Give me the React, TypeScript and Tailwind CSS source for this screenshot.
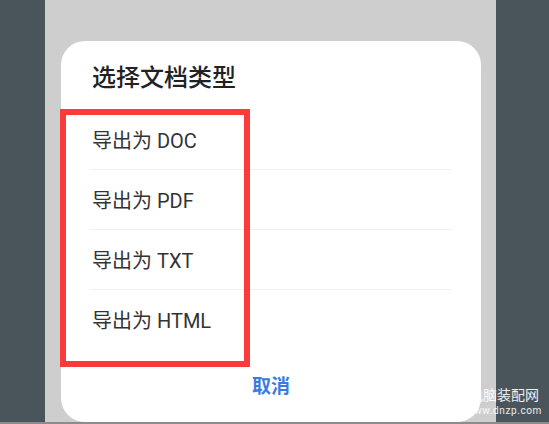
const options = ["导出为 DOC", "导出为 PDF", "导出为 TXT", "导出为 HTML"];

export default function App() {
  return (
    <div
      className="relative h-[424px] w-[549px] overflow-hidden bg-[#4a545b]"
      style={{ fontFamily: 'Roboto, "Noto Sans CJK SC", sans-serif' }}
    >
      <div className="flex h-[422px]">
        <div className="w-[45px] shrink-0" />
        <div className="w-[451px] shrink-0 bg-[#cecece] pl-[16px] pt-[41px]">
          {/* dialog sheet */}
          <div className="h-[381px] w-[420px] rounded-[24px] bg-white">
            <h2 className="pl-[31px] pt-[21px] text-[24px] font-medium leading-[32px] text-[#222]">
              选择文档类型
            </h2>
            <ul className="mt-[16px] px-[29px]">
              {options.map((opt, i) => (
                <li
                  key={opt}
                  className={
                    "flex h-[60px] items-center pl-[2px] pt-[2px] text-[20px] text-[#333] " +
                    (i < options.length - 1 ? "border-b border-[#f0f0f0]" : "")
                  }
                >
                  {opt}
                </li>
              ))}
            </ul>
            <div className="flex h-[74px] items-center justify-center text-[19px] font-semibold text-[#3a7be0]">
              取消
            </div>
          </div>
        </div>
        <div className="flex-1" />
      </div>
      <div className="h-[2px] bg-[#8c8c8c]" />

      {/* red highlight annotation */}
      <div className="absolute left-[60px] top-[109px] h-[258px] w-[190px] border-[6px] border-[#fb3a3a]" />

      {/* watermark */}
      <div className="absolute left-[468px] top-[387px] flex w-[72px] flex-col items-center text-white/90">
        <span className="text-[14px] leading-[17px]">电脑装配网</span>
        <span className="text-[10px] leading-[14px] tracking-[0.6px]">www.dnzp.com</span>
      </div>
    </div>
  );
}
